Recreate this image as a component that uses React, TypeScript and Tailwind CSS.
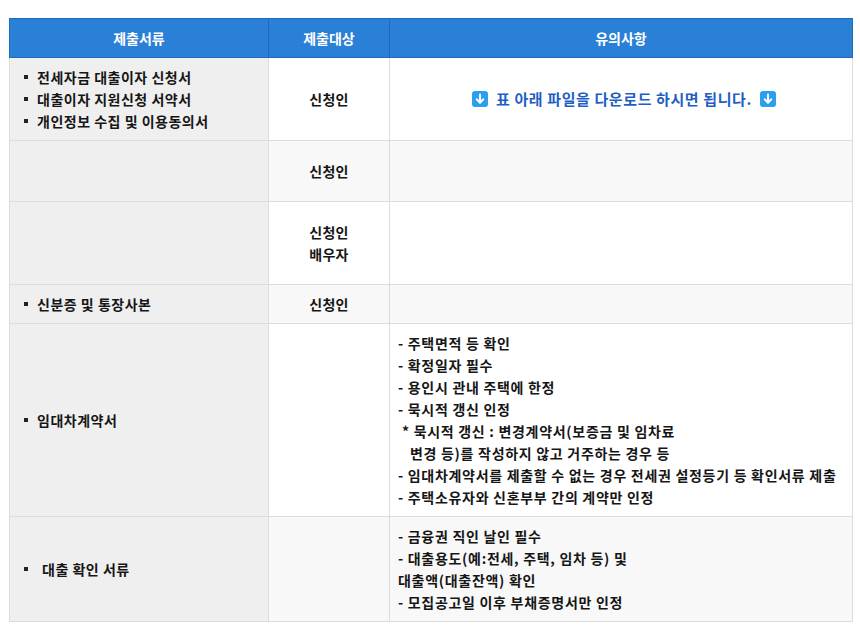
import React from "react";

const font = { fontFamily: '"Noto Sans CJK KR", "Noto Sans", sans-serif' };

function DownIcon() {
  return (
    <span className="inline-flex h-[16px] w-[16px] items-center justify-center rounded-[3px] bg-[#2b9ef0] align-[-2px]">
      <svg width="10" height="12" viewBox="0 0 10 12">
        <path d="M5 1.5V9" stroke="#fff" strokeWidth="2" strokeLinecap="round" />
        <path d="M1.8 6.3L5 9.8L8.2 6.3" stroke="#fff" strokeWidth="2" fill="none" strokeLinejoin="round" strokeLinecap="round" />
      </svg>
    </span>
  );
}

function Bullet({ children, extra }: { children: React.ReactNode; extra?: boolean }) {
  return (
    <div className="flex items-center leading-[22px]">
      <span className="mr-[9px] inline-block h-[4px] w-[4px] bg-[#222]" />
      {extra && <span className="w-[5px]" />}
      <span>{children}</span>
    </div>
  );
}

export default function App() {
  const td1 = "border border-[#dcdcdc] bg-[#efefef] pl-[14px] pr-[8px] py-[8px] align-middle tracking-[0.5px]";
  const td2 = "border border-[#dcdcdc] px-[8px] py-[8px] text-center align-middle leading-[22px] tracking-[0.3px]";
  const td3 = "border border-[#dcdcdc] pl-[8px] pr-[2px] py-[8px] align-middle leading-[22px] tracking-[0.7px]";
  return (
    <div className="min-h-[632px] bg-white pt-[18px] pl-[9px]" style={font}>
      <table className="w-[843px] table-fixed border-collapse text-[14px] font-bold text-[#161616]">
        <colgroup>
          <col className="w-[259px]" />
          <col className="w-[121px]" />
          <col className="w-[463px]" />
        </colgroup>
        <thead>
          <tr className="h-[39px] bg-[#2a80d6] text-white">
            <th className="border border-[#1d6bbf] font-bold">제출서류</th>
            <th className="border border-[#1d6bbf] font-bold">제출대상</th>
            <th className="border border-[#1d6bbf] font-bold">유의사항</th>
          </tr>
        </thead>
        <tbody>
          <tr className="h-[83px] bg-white">
            <td className={td1}>
              <Bullet>전세자금 대출이자 신청서</Bullet>
              <Bullet>대출이자 지원신청 서약서</Bullet>
              <Bullet>개인정보 수집 및 이용동의서</Bullet>
            </td>
            <td className={td2}>신청인</td>
            <td className={td3 + " text-center"}>
              <span className="inline-flex items-center gap-[8px] text-[15px] tracking-[0.6px] text-[#1f5fc4]">
                <DownIcon />
                <span>표 아래 파일을 다운로드 하시면 됩니다.</span>
                <DownIcon />
              </span>
            </td>
          </tr>
          <tr className="h-[61px] bg-[#f8f8f8]">
            <td className={td1}></td>
            <td className={td2}>신청인</td>
            <td className={td3}></td>
          </tr>
          <tr className="h-[83px] bg-white">
            <td className={td1}></td>
            <td className={td2}>
              신청인
              <br />
              배우자
            </td>
            <td className={td3}></td>
          </tr>
          <tr className="h-[39px] bg-[#f8f8f8]">
            <td className={td1}>
              <Bullet>신분증 및 통장사본</Bullet>
            </td>
            <td className={td2}>신청인</td>
            <td className={td3}></td>
          </tr>
          <tr className="h-[193px] bg-white">
            <td className={td1}>
              <Bullet>임대차계약서</Bullet>
            </td>
            <td className={td2}></td>
            <td className={td3}>
              <div>- 주택면적 등 확인</div>
              <div>- 확정일자 필수</div>
              <div>- 용인시 관내 주택에 한정</div>
              <div>- 묵시적 갱신 인정</div>
              <div className="pl-[4px]">* 묵시적 갱신 : 변경계약서(보증금 및 임차료</div>
              <div className="pl-[12px]">변경 등)를 작성하지 않고 거주하는 경우 등</div>
              <div className="whitespace-nowrap">- 임대차계약서를 제출할 수 없는 경우 전세권 설정등기 등 확인서류 제출</div>
              <div>- 주택소유자와 신혼부부 간의 계약만 인정</div>
            </td>
          </tr>
          <tr className="h-[105px] bg-[#f8f8f8]">
            <td className={td1}>
              <Bullet extra>대출 확인 서류</Bullet>
            </td>
            <td className={td2}></td>
            <td className={td3}>
              <div>- 금융권 직인 날인 필수</div>
              <div>- 대출용도(예:전세, 주택, 임차 등) 및</div>
              <div>대출액(대출잔액) 확인</div>
              <div>- 모집공고일 이후 부채증명서만 인정</div>
            </td>
          </tr>
        </tbody>
      </table>
    </div>
  );
}
